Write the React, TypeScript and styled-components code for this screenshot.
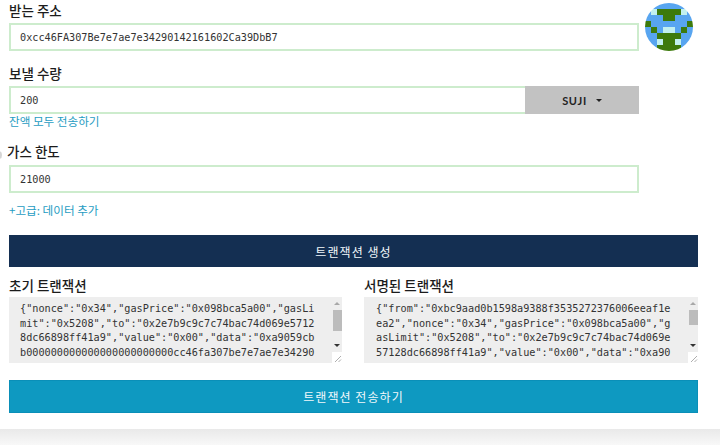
import React from 'react';
import styled, { createGlobalStyle } from 'styled-components';

const GlobalStyle = createGlobalStyle`
  html, body {
    margin: 0;
    padding: 0;
    background: #fff;
  }
  * {
    box-sizing: border-box;
  }
`;

const Page = styled.div`
  position: relative;
  width: 720px;
  height: 445px;
  overflow: hidden;
  font-family: 'Lato', 'Noto Sans CJK KR', sans-serif;
  color: #222;
`;

const Card = styled.div`
  height: 429px;
  padding: 0 22px 0 9px;
  background: #fff;
`;

const Shade = styled.div`
  height: 16px;
  background: linear-gradient(#e9e9e9, #f8f8f8);
`;

const EdgeDot = styled.div`
  position: absolute;
  left: -4px;
  top: 151px;
  width: 6px;
  height: 8px;
  border-radius: 50%;
  background: #d5d5d5;
`;

const TopRow = styled.div`
  display: flex;
  gap: 6px;
`;

const Fields = styled.div`
  width: 630px;
`;

const Label = styled.label<{ $shift?: number; $top?: number }>`
  display: block;
  height: 18px;
  margin-top: ${(p) => p.$top || 0}px;
  margin-left: ${(p) => p.$shift || 0}px;
  font-size: 13.5px;
  line-height: 18px;
  font-weight: 500;
  font-family: 'Noto Sans CJK KR', sans-serif;
  color: #1c1c1c;
`;

const AddressInput = styled.input<{ $top?: number }>`
  display: block;
  width: 100%;
  height: 28px;
  margin-top: ${(p) => p.$top || 0}px;
  padding: 0 9px;
  border: 2px solid #cdeccd;
  border-radius: 0;
  outline: none;
  background: #fff;
  font-family: 'DejaVu Sans Mono', monospace;
  font-size: 10.2px;
  color: #333;
`;

const Avatar = styled.svg`
  flex: none;
  width: 48px;
  height: 48px;
  margin-top: 3px;
  border-radius: 50%;
`;

const AmountRow = styled.div`
  display: flex;
  height: 28px;
  margin-top: 4px;
`;

const AmountInput = styled(AddressInput)`
  flex: 1;
  width: auto;
  border-right: none;
`;

const UnitButton = styled.button`
  flex: none;
  display: flex;
  align-items: center;
  justify-content: center;
  gap: 9px;
  width: 114px;
  height: 28px;
  padding: 0;
  border: none;
  border-radius: 0;
  background: #c2c2c2;
  font-family: 'Lato', sans-serif;
  font-size: 11px;
  font-weight: 700;
  letter-spacing: 0.7px;
  color: #222;
`;

const Caret = styled.span`
  width: 0;
  height: 0;
  border-left: 3px solid transparent;
  border-right: 3px solid transparent;
  border-top: 3px solid #222;
`;

const TextLink = styled.a<{ $top?: number }>`
  display: block;
  height: 14px;
  margin-top: ${(p) => p.$top || 0}px;
  font-family: 'Noto Sans CJK KR', sans-serif;
  font-size: 11.6px;
  line-height: 14px;
  color: #1f9cc2;
`;

const WideButton = styled.button<{ $tone: 'navy' | 'blue'; $top: number }>`
  display: block;
  width: 689px;
  height: ${(p) => (p.$tone === 'navy' ? 32 : 33)}px;
  margin-top: ${(p) => p.$top}px;
  border: 1px solid ${(p) => (p.$tone === 'navy' ? '#142f52' : '#0a8fb8')};
  border-radius: 0;
  background: ${(p) => (p.$tone === 'navy' ? '#142f52' : '#0e99c1')};
  font-family: 'Noto Sans CJK KR', sans-serif;
  font-size: 12px;
  letter-spacing: 1.05px;
  color: #f2f8fb;
`;

const Panels = styled.div`
  display: flex;
  justify-content: space-between;
  width: 689px;
  margin-top: 9px;
`;

const Panel = styled.div<{ $width: number }>`
  width: ${(p) => p.$width}px;
`;

const RawBox = styled.div`
  display: flex;
  height: 66px;
  margin-top: 3px;
  background: #eee;
`;

const RawText = styled.div<{ $inset: number }>`
  flex: 1;
  min-width: 0;
  overflow: hidden;
  padding: 5px 16px 0 ${(p) => p.$inset}px;
  font-family: 'DejaVu Sans Mono', monospace;
  font-size: 10.2px;
  line-height: 14.7px;
  color: #333;
  word-break: break-all;
`;

const ScrollRail = styled.div`
  flex: none;
  display: flex;
  flex-direction: column;
  width: 10px;
`;

const RailButton = styled.div<{ $dir: 'up' | 'down' }>`
  flex: none;
  display: flex;
  align-items: center;
  justify-content: center;
  height: ${(p) => (p.$dir === 'up' ? 13 : 14)}px;

  &::before {
    content: '';
    border-left: 3px solid transparent;
    border-right: 3px solid transparent;
    ${(p) => (p.$dir === 'up' ? 'border-bottom: 3px solid #a8a8a8;' : 'border-top: 3px solid #333;')}
  }
`;

const RailTrack = styled.div`
  flex: 1;
`;

const RailThumb = styled.div<{ $height: number }>`
  height: ${(p) => p.$height}px;
  margin: 0 0.5px;
  background: #bcbcbc;
`;

const Resizer = styled.svg`
  flex: none;
  display: block;
  width: 10px;
  height: 11px;
  background: #fff;
`;

const GREEN = '#3d7a0c';
const BLUE = '#58a5f0';
const PALE = '#c2f0f0';

// 8x8 identicon, b = blue, g = green, p = pale
const avatarRows = [
  'bbbbbbbb',
  'bpggggpb',
  'bbbggbbb',
  'gbbbbbbg',
  'bgbppbgb',
  'bbggggbb',
  'bbpggpbb',
  'bbggggbb',
];

const cellColor = (c: string) => (c === 'g' ? GREEN : c === 'p' ? PALE : BLUE);

// only what shows in the four visible lines
const rawTx =
  '{"nonce":"0x34","gasPrice":"0x098bca5a00","gasLimit":"0x5208","to":"0x2e7b9c9c7c74bac74d069e57128dc66898ff41a9","value":"0x00","data":"0xa9059cbb000000000000000000000000cc46fa307be7e7ae7e34290';

const signedTx =
  '{"from":"0xbc9aad0b1598a9388f3535272376006eeaf1eea2","nonce":"0x34","gasPrice":"0x098bca5a00","gasLimit":"0x5208","to":"0x2e7b9c9c7c74bac74d069e57128dc66898ff41a9","value":"0x00","data":"0xa90';

const RawField = ({ text, inset, thumb }: { text: string; inset: number; thumb: number }) => (
  <RawBox>
    <RawText $inset={inset}>{text}</RawText>
    <ScrollRail>
      <RailButton $dir="up" />
      <RailTrack>
        <RailThumb $height={thumb} />
      </RailTrack>
      <RailButton $dir="down" />
      <Resizer viewBox="0 0 10 11">
        <path d="M3 10 L9 4 M6.5 10 L9 7.5" stroke="#999" strokeWidth="0.8" fill="none" />
      </Resizer>
    </ScrollRail>
  </RawBox>
);

const App = () => {
  return (
    <Page>
      <GlobalStyle />
      <EdgeDot />
      <Card>
        <TopRow>
          <Fields>
            <Label $top={1}>받는 주소</Label>
            <AddressInput $top={4} readOnly defaultValue="0xcc46FA307Be7e7ae7e34290142161602Ca39DbB7" />
          </Fields>
          <Avatar viewBox="0 0 8 8">
            {avatarRows.map((row, y) =>
              row.split('').map((c, x) => (
                <rect key={`${x}-${y}`} x={x} y={y} width="1" height="1" fill={cellColor(c)} />
              )),
            )}
          </Avatar>
        </TopRow>
        <Fields>
          <Label $top={13}>보낼 수량</Label>
          <AmountRow>
            <AmountInput readOnly defaultValue="200" />
            <UnitButton>
              SUJI
              <Caret />
            </UnitButton>
          </AmountRow>
          <TextLink>잔액 모두 전송하기</TextLink>
          <Label $shift={-2} $top={14}>
            가스 한도
          </Label>
          <AddressInput $top={5} readOnly defaultValue="21000" />
          <TextLink $top={10}>+고급: 데이터 추가</TextLink>
        </Fields>
        <WideButton $tone="navy" $top={18}>
          트랜잭션 생성
        </WideButton>
        <Panels>
          <Panel $width={333}>
            <Label>초기 트랜잭션</Label>
            <RawField text={rawTx} inset={11} thumb={21} />
          </Panel>
          <Panel $width={334}>
            <Label>서명된 트랜잭션</Label>
            <RawField text={signedTx} inset={12} thumb={15} />
          </Panel>
        </Panels>
        <WideButton $tone="blue" $top={17}>
          트랜잭션 전송하기
        </WideButton>
      </Card>
      <Shade />
    </Page>
  );
};

export default App;
